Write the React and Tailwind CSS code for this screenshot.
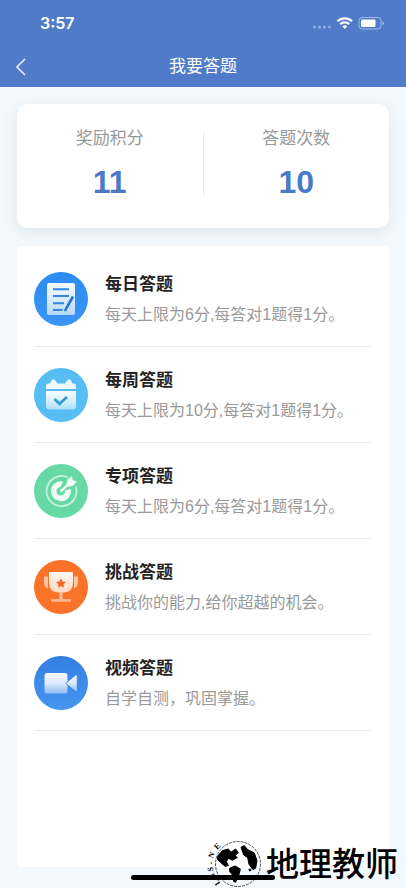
import React from 'react';

function DailyIcon() {
  return (
    <svg viewBox="0 0 54 54" className="size-[54px] shrink-0" aria-hidden="true">
      <defs>
        <linearGradient id="dailyBg" x1="0" y1="0" x2="0" y2="1">
          <stop offset="0" stopColor="#2b8cf0" />
          <stop offset="1" stopColor="#3a95f5" />
        </linearGradient>
        <linearGradient id="dailyPaper" x1="0" y1="0" x2="0" y2="1">
          <stop offset="0" stopColor="#f6fbff" />
          <stop offset="0.5" stopColor="#dcecfe" />
          <stop offset="1" stopColor="#b4d8fc" />
        </linearGradient>
      </defs>
      <circle cx="27" cy="27" r="27" fill="url(#dailyBg)" />
      <rect x="13" y="11" width="28" height="32" rx="2" fill="url(#dailyPaper)" />
      <g stroke="#3186e0" strokeWidth="2">
        <path d="M19 17.200H35M19 24H35M19 31.300H30M19 38H28.500" />
      </g>
      <path d="M39 24.500L32 37.500" stroke="#d5e9fe" strokeWidth="4.500" />
      <path d="M39 24.500L32.500 36L31 39" stroke="#2474c8" strokeWidth="2.600" fill="none" />
    </svg>
  );
}

function WeeklyIcon() {
  return (
    <svg viewBox="0 0 54 54" className="size-[54px] shrink-0" aria-hidden="true">
      <defs>
        <linearGradient id="weekBody" x1="0" y1="0" x2="0" y2="1">
          <stop offset="0" stopColor="#f3fbff" />
          <stop offset="0.5" stopColor="#dcf2fe" />
          <stop offset="1" stopColor="#a9defa" />
        </linearGradient>
      </defs>
      <circle cx="27" cy="27" r="27" fill="#56bdf5" />
      <path d="M12 21V18q0-2.500 2.500-2.500H16l1.800-3.500q1.700-1.500 3.200 0l2.500 3.500h7.500l2.500-3.500q1.500-1.500 3.200 0l1.800 3.500h1q2.500 0 2.500 2.500v3z" fill="#edf9ff" />
      <path d="M12 23H42V38q0 3.500-3.500 3.500h-23Q12 41.500 12 38z" fill="url(#weekBody)" />
      <path d="M20.500 31l5 4.800 7.500-6.800" fill="none" stroke="#2f9bd8" strokeWidth="2.800" />
    </svg>
  );
}

function TargetIcon() {
  return (
    <svg viewBox="0 0 54 54" className="size-[54px] shrink-0" aria-hidden="true">
      <circle cx="27" cy="27" r="27" fill="#67d9a4" />
      <path d="M34 13.500A15 15 0 1 0 42 23" fill="none" stroke="#c6f3de" strokeWidth="1.800" />
      <path d="M29 17.400A10 10 0 1 0 36.700 25L31 26.500A4.300 4.300 0 1 1 26.500 23z" fill="#f1fcf6" />
      <path d="M26.500 27.500L37 18" stroke="#f1fcf6" strokeWidth="2.400" />
      <path d="M32.500 20L33.500 15.500L38 12l.5 4 4.500 1.500-4 4.500-5 .8z" fill="#f1fcf6" />
    </svg>
  );
}

function TrophyIcon() {
  return (
    <svg viewBox="0 0 54 54" className="size-[54px] shrink-0" aria-hidden="true">
      <defs>
        <linearGradient id="cup" x1="0" y1="0" x2="0" y2="1">
          <stop offset="0" stopColor="#fff7f1" />
          <stop offset="1" stopColor="#ffd9c2" />
        </linearGradient>
      </defs>
      <circle cx="27" cy="27" r="27" fill="#fb7229" />
      <path d="M10 16.500h4v12q-4-1.500-4-5.500zM40 16.500h4V23q0 4-4 5.500z" fill="#ffc4a0" />
      <path d="M15 13q0-1 1-1h22q1 0 1 1v9q0 10.500-9 10.500h-6q-9 0-9-10.500z" fill="url(#cup)" />
      <path d="M25.500 32h3v7.500h-3z" fill="#ffc4a0" />
      <rect x="17" y="39" width="20" height="2.800" rx="1" fill="#ffb58a" />
      <path d="M27 18.300l1.600 3.100 3.400.5-2.500 2.400.6 3.500-3.100-1.700-3.100 1.700.6-3.500-2.500-2.400 3.400-.5z" fill="#f0642a" />
    </svg>
  );
}

function VideoIcon() {
  return (
    <svg viewBox="0 0 54 54" className="size-[54px] shrink-0" aria-hidden="true">
      <defs>
        <linearGradient id="videoBg" x1="0" y1="0" x2="0" y2="1">
          <stop offset="0" stopColor="#3380e2" />
          <stop offset="1" stopColor="#4695f1" />
        </linearGradient>
        <linearGradient id="camera" x1="0" y1="0" x2="0" y2="1">
          <stop offset="0" stopColor="#f5f9ff" />
          <stop offset="0.5" stopColor="#dce9fc" />
          <stop offset="1" stopColor="#8dbcf6" />
        </linearGradient>
      </defs>
      <circle cx="27" cy="27" r="27" fill="url(#videoBg)" />
      <rect x="10.500" y="17" width="23" height="20.500" rx="2.500" fill="url(#camera)" />
      <path d="M41.500 19q1.800-1 1.800 1v14.500q0 2-1.800 1L33 28.500q-1.300-1.200 0-2.400z" fill="url(#camera)" stroke="#3b88e8" strokeWidth="1" />
    </svg>
  );
}

const quizzes = [
  { title: '每日答题', text: '每天上限为6分,每答对1题得1分。', Icon: DailyIcon },
  { title: '每周答题', text: '每天上限为10分,每答对1题得1分。', Icon: WeeklyIcon },
  { title: '专项答题', text: '每天上限为6分,每答对1题得1分。', Icon: TargetIcon },
  { title: '挑战答题', text: '挑战你的能力,给你超越的机会。', Icon: TrophyIcon },
  { title: '视频答题', text: '自学自测，巩固掌握。', Icon: VideoIcon },
];

function StatusBar() {
  return (
    <div className="flex h-[46px] items-center justify-between pr-[22px] pl-10">
      <span className="font-['Inter','Liberation_Sans',sans-serif] text-base leading-5 font-semibold">3:57</span>
      <svg viewBox="0 0 74 16" className="h-4 w-[74px]" aria-hidden="true">
        <g fill="#8fabe0">
          <circle cx="4.500" cy="12" r="1.600" />
          <circle cx="9.500" cy="12" r="1.600" />
          <circle cx="14.500" cy="12" r="1.600" />
          <circle cx="19.500" cy="12" r="1.600" />
        </g>
        <g fill="none" stroke="#fff" strokeWidth="2.200">
          <path d="M27.500 6.200a10.500 10.500 0 0 1 14.500 0" />
          <path d="M30.300 9.200a6.500 6.500 0 0 1 8.900 0" />
        </g>
        <path d="M32.200 11.200a4 4 0 0 1 5.100 0L34.800 14z" fill="#fff" />
        <rect x="49" y="2.500" width="22" height="11.500" rx="3.200" fill="none" stroke="#a3b8e6" />
        <rect x="51" y="4.500" width="14.500" height="7.500" rx="1.200" fill="#fff" />
        <path d="M72.500 6.200q1.500.6 1.500 2t-1.500 2z" fill="#a3b8e6" />
      </svg>
    </div>
  );
}

function Stat({ label, value }) {
  return (
    <div className="flex flex-1 flex-col items-center">
      <dt className="text-[17px] leading-6 text-[#999]">{label}</dt>
      <dd className="mt-3 text-[32px] leading-[38px] font-bold text-[#4b7ac8]">{value}</dd>
    </div>
  );
}

function Watermark() {
  return (
    <div className="absolute right-2 bottom-0 flex items-center">
      <svg viewBox="0 0 64 50" className="h-[50px] w-16" aria-hidden="true">
        <circle cx="36" cy="26" r="22.500" fill="none" stroke="#222" strokeWidth="0.800" strokeDasharray="3 1" />
        <g transform="translate(-6.300 -5.700) scale(0.333)" stroke="#000" strokeWidth="3" strokeLinejoin="round">
          <path d="M66 72L80 55L98 50L106 60L120 50L128 62L118 70L125 76L110 84L98 78L92 88L98 100L88 102L74 90L66 82z" />
          <path d="M136 45L146 40L156 52L176 62L184 85L180 108L172 112L160 96L156 76L144 68z" />
          <path d="M102 108L118 101L134 110L131 124L120 150L114 148L112 130L102 118z" />
          <circle cx="163" cy="113" r="3" />
        </g>
        <g fontFamily="Liberation Serif, serif" fontWeight="700" fontSize="8" textAnchor="middle">
          <text transform="translate(17 10) rotate(-46)">E</text>
          <text transform="translate(12 18) rotate(-66)">N</text>
          <text transform="translate(10 25) rotate(-90)">.</text>
          <text transform="translate(11 31) rotate(-96)">S</text>
          <text transform="translate(13 37) rotate(-110)">S</text>
          <text transform="translate(17 43) rotate(-124)">L</text>
        </g>
      </svg>
      <span className="pt-1 text-[33px] leading-10 font-medium text-black">地理教师</span>
    </div>
  );
}

export default function App() {
  return (
    <div className="relative flex min-h-screen flex-col overflow-hidden bg-[#f3f8fc] font-['Liberation_Sans','Noto_Sans_CJK_SC',sans-serif]">
      <header className="bg-[#507bc8] text-white">
        <StatusBar />
        <div className="grid h-[41px] grid-cols-[44px_1fr_44px] items-center">
          <button type="button" aria-label="返回" className="flex h-full items-center pl-4">
            <svg viewBox="0 0 10 18" className="h-[18px] w-2.5" fill="none" stroke="#e3ebfa" strokeWidth="1.600" aria-hidden="true">
              <path d="M9 1L1 9l8 8" />
            </svg>
          </button>
          <h1 className="text-center text-[17px] leading-6">我要答题</h1>
        </div>
      </header>

      <main className="flex flex-1 flex-col gap-[18px] px-[17px] pt-[17px] pb-[21px]">
        <dl className="flex rounded-[10px] bg-white pt-[23px] pb-[27px] shadow-[0_4px_16px_rgba(80,110,150,0.12)]">
          <Stat label="奖励积分" value="11" />
          <div className="my-1 w-px bg-[#eee]" />
          <Stat label="答题次数" value="10" />
        </dl>

        <ul className="flex-1 rounded bg-white px-[17px] pt-[5px]">
          {quizzes.map(({ title, text, Icon }) => (
            <li key={title} className="border-b border-[#e8e8e8]">
              <a href="#" className="flex h-[95px] items-center gap-[17px]">
                <Icon />
                <span className="flex flex-col pt-0.5">
                  <strong className="text-[17px] leading-[30px] font-bold text-[#222]">{title}</strong>
                  <span className="text-base leading-[30px] whitespace-nowrap text-[#999]">{text}</span>
                </span>
              </a>
            </li>
          ))}
        </ul>
      </main>

      <Watermark />
      <div className="absolute bottom-2 left-1/2 h-[5px] w-36 -translate-x-1/2 rounded-full bg-black" />
    </div>
  );
}
